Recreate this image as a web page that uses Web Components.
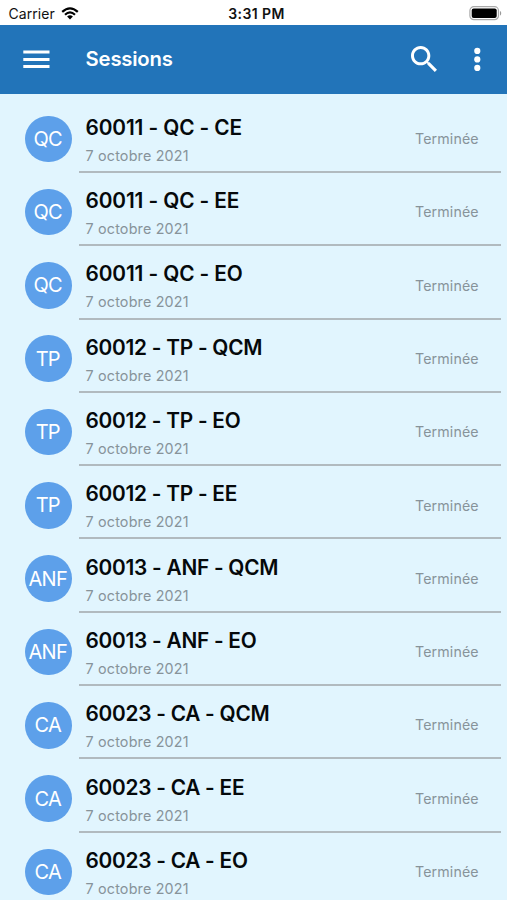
<!DOCTYPE html>
<html lang="fr">
<head>
<meta charset="utf-8">
<title>Sessions</title>
<style>
html,body{margin:0;height:100%;overflow:hidden}
body{font-family:Inter,"Liberation Sans",sans-serif;background:#e1f5fe}
</style>
</head>
<body>
<sessions-app></sessions-app>
<script>
const define=(name,html,setup)=>{
  const template=document.createElement('template');
  template.innerHTML=html;
  customElements.define(name,class extends HTMLElement{
    constructor(){super();this.attachShadow({mode:'open'}).append(template.content.cloneNode(true));}
    connectedCallback(){if(setup)setup(this,this.shadowRoot);}
  });
};

define('status-bar',`<style>
:host{display:grid;grid-template-columns:1fr auto 1fr;align-items:center;box-sizing:border-box;height:25.4px;padding:2px 5px 0 8.4px;background:#fff;color:#111}
.left{display:flex;align-items:center;gap:6.5px;font-size:14px;line-height:20px}
.carrier{letter-spacing:.08px}
.time{font-size:14px;font-weight:600;line-height:20px;letter-spacing:.4px;padding-left:2.6px}
.right{display:flex;justify-content:flex-end}
svg{display:block}
</style>
<div class="left"><span class="carrier">Carrier</span>
<svg width="18" height="13" viewBox="0 0 18 13" fill="none" stroke="#000" stroke-width="2.2"><path d="M1.2 4.9Q9-2.3 16.8 4.9"/><path d="M4 7.7Q9 3.1 14 7.7"/><path d="M6.1 9.6Q9 7 11.9 9.6L9 12.5Z" fill="#000" stroke="none"/></svg></div>
<span class="time">3:31 PM</span>
<div class="right"><svg width="33" height="15" viewBox="0 0 33 15"><rect x=".9" y=".7" width="28.6" height="13" rx="4" fill="#fff" stroke="#aaa" stroke-width="1.2"/><rect x="2.7" y="2.5" width="25" height="9.4" rx="2" fill="#000"/><path d="M31 4.9c1.6.6 1.6 4 0 4.6z" fill="#999"/></svg></div>`);

define('app-bar',`<style>
:host{display:flex;align-items:center;box-sizing:border-box;height:68.3px;padding:0 20px 1.3px 23px;background:#2274b9;color:#fff}
h1{margin:0 0 0 35.6px;flex:1;font-size:20.3px;font-weight:600;line-height:28px;letter-spacing:-.2px}
svg{display:block}
.search{margin-right:30px}
</style>
<svg width="27" height="20" viewBox="0 0 27 20" fill="#fff"><path d="M.3 1.5h26.2v3H.3zM.3 8.9h26.2v3H.3zM.3 16.1h26.2v3H.3z"/></svg>
<h1><slot></slot></h1>
<svg class="search" width="26" height="26" viewBox="3 3 17.49 17.49" fill="#fff"><path d="M15.5 14h-.79l-.28-.27C15.41 12.59 16 11.11 16 9.5 16 5.91 13.09 3 9.5 3S3 5.91 3 9.5 5.91 16 9.5 16c1.61 0 3.09-.59 4.23-1.57l.27.28v.79l5 4.99L20.49 19l-4.99-5zm-6 0C7.01 14 5 11.99 5 9.5S7.01 5 9.5 5 14 7.01 14 9.5 11.99 14 9.5 14z"/></svg>
<svg width="20" height="26" viewBox="0 0 20 26" fill="#fff"><circle cx="10.3" cy="4.9" r="3.1"/><circle cx="10.3" cy="13.4" r="3.1"/><circle cx="10.3" cy="21.9" r="3.1"/></svg>`);

define('session-avatar',`<style>
:host{display:flex;align-items:center;justify-content:center;box-sizing:border-box;width:46.6px;height:46.6px;padding-right:1.6px;border-radius:50%;background:#5da0ea;color:#fff;font-size:20px;line-height:24px;white-space:nowrap;letter-spacing:-.7px}
</style><slot></slot>`);

define('session-row',`<style>
:host{display:flex;height:73.31px;box-sizing:border-box;padding:0 6px 0 25.3px}
session-avatar{margin:15.9px 7.6px 0 0;flex:none}
.body{flex:1;display:flex;align-items:center;box-sizing:border-box;border-bottom:2px solid #b1babf;padding:7.4px 22.3px 0 6px}
.text{flex:1;padding-top:1.6px}
.title{font-size:20.8px;font-weight:600;line-height:28px;color:#05090b;white-space:nowrap;letter-spacing:var(--title-spacing,-.24px)}
.date{font-size:14.3px;line-height:20px;margin-top:4px;color:#87939a;letter-spacing:.2px}
.state{font-size:14.2px;line-height:20px;color:#87939a;letter-spacing:.12px}
</style>
<session-avatar></session-avatar>
<div class="body"><div class="text"><div class="title"><slot></slot></div><div class="date"></div></div><span class="state"></span></div>`,(el,root)=>{
  root.querySelector('session-avatar').textContent=el.getAttribute('code');
  root.querySelector('.date').textContent=el.getAttribute('date');
  root.querySelector('.state').textContent=el.getAttribute('state');
});

define('sessions-app',`<style>
:host{display:flex;flex-direction:column;height:100vh;overflow:hidden;background:#e1f5fe}
status-bar,app-bar,session-row{flex:none}
session-row[code="QC"]{--title-spacing:-.1px}
main{padding-top:6px;flex:1;min-height:0;overflow:hidden}
</style>
<status-bar></status-bar><app-bar>Sessions</app-bar><main></main>`,(el,root)=>{
  const main=root.querySelector('main');
  for(const title of ['60011 - QC - CE','60011 - QC - EE','60011 - QC - EO','60012 - TP - QCM','60012 - TP - EO','60012 - TP - EE','60013 - ANF - QCM','60013 - ANF - EO','60023 - CA - QCM','60023 - CA - EE','60023 - CA - EO']){
    const row=document.createElement('session-row');
    row.setAttribute('code',title.split(' - ')[1]);
    row.setAttribute('date','7 octobre 2021');
    row.setAttribute('state','Terminée');
    row.textContent=title;
    main.append(row);
  }
});
</script>
</body>
</html>
